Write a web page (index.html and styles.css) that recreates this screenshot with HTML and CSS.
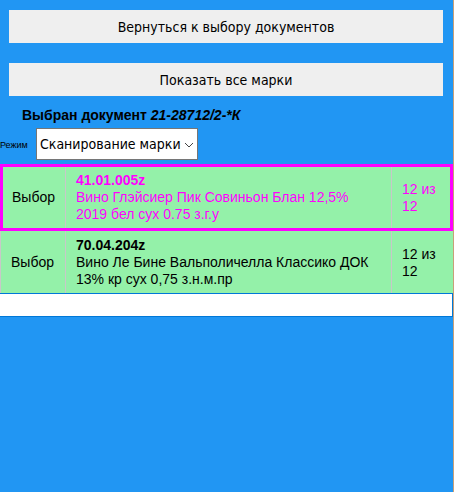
FILE: index.html
```html
<!DOCTYPE html>
<html lang="ru">
<head>
<meta charset="utf-8">
<title>Документ</title>
<link rel="stylesheet" href="styles.css">
</head>
<body>
<main class="page">
  <div class="actions">
    <button type="button" class="action">Вернуться к выбору документов</button>
    <button type="button" class="action">Показать все марки</button>
  </div>
  <p class="document">Выбран документ <em>21-28712/2-*К</em></p>
  <div class="mode">
    <label class="mode-label" for="mode">Режим</label>
    <div class="mode-box">
      <select id="mode" class="mode-select"><option>Сканирование марки</option></select>
      <svg class="chevron" viewBox="0 0 10 6" aria-hidden="true"><path d="M1 1l4 4 4-4"/></svg>
    </div>
  </div>
  <table class="items">
    <tbody>
      <tr class="item selected">
        <td class="pick">Выбор</td>
        <td class="name"><b>41.01.005z</b><br>Вино Глэйсиер Пик Совиньон Блан 12,5% 2019 бел сух 0.75 з.г.у</td>
        <td class="count">12 из 12</td>
      </tr>
      <tr class="item">
        <td class="pick">Выбор</td>
        <td class="name"><b>70.04.204z</b><br>Вино Ле Бине Вальполичелла Классико ДОК 13% кр сух 0,75 з.н.м.пр</td>
        <td class="count">12 из 12</td>
      </tr>
    </tbody>
  </table>
  <div class="footer"></div>
</main>
</body>
</html>
```
FILE: styles.css
```css
* { box-sizing: border-box; }
body {
  margin: 0;
  background: #2196f3;
  color: #000;
  font: 14px/17px "Liberation Sans", Arial, sans-serif;
}
.page {
  min-height: 100vh;
  border-right: 1px solid #c8a078;
}
.actions {
  display: flex;
  flex-direction: column;
  gap: 20px;
  padding: 10px 10px 0 9px;
}
.action {
  height: 33px;
  padding: 0;
  border: 0;
  background: #efefef;
  color: #000;
  font: 14px "DejaVu Sans Condensed", Tahoma, sans-serif;
}
.document {
  margin: 11px 0 4px 22px;
  font-weight: bold;
}
.mode {
  display: flex;
  align-items: center;
  gap: 9px;
}
.mode-label {
  width: 27px;
  padding-top: 3px;
  font-size: 9px;
}
.mode-box { position: relative; }
.mode-select {
  display: block;
  appearance: none;
  width: 162px;
  height: 32px;
  padding: 0 0 0 3px;
  border: 1px solid #767676;
  border-radius: 0;
  background: #fff;
  color: #000;
  font: 14px "DejaVu Sans Condensed", Tahoma, sans-serif;
}
.chevron {
  position: absolute;
  right: 4px;
  top: 14px;
  width: 10px;
  height: 6px;
  fill: none;
  stroke: #444;
  pointer-events: none;
}
.items {
  width: 100%;
  margin-top: 4px;
  border-spacing: 0;
  table-layout: fixed;
  background: #94f1a9;
}
.items td {
  padding: 6px 10px 5px;
  border-left: 1px solid #c8c8c8;
}
.items .pick { width: 65px; }
.items .count { width: 62px; }
.selected {
  outline: 3px solid #f0f;
  outline-offset: -3px;
}
.items .selected td {
  padding-top: 8px;
  padding-bottom: 8px;
}
.items .selected .pick { padding-left: 11px; }
.selected .name, .selected .count { color: #f0f; }
.footer {
  height: 24px;
  border: 1px solid #0078d7;
  border-left: 0;
  background: #fff;
}
```
